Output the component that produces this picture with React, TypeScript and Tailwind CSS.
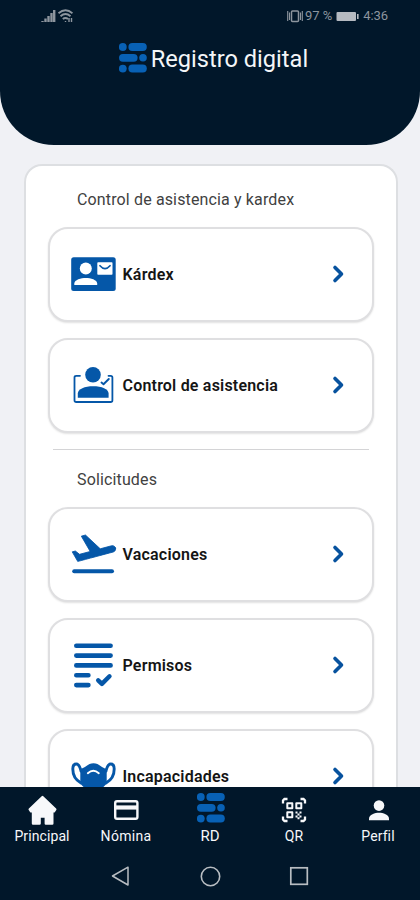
import type { ReactNode } from "react";

function Logo({ className }: { className: string }) {
  return (
    <svg className={className} viewBox="0 0 28 30" fill="#0861b5">
      <circle cx="3.8" cy="4" r="3.9" />
      <rect x="9.4" y="0" width="18.4" height="8" rx="4" />
      <rect x="0" y="10.9" width="18.6" height="7.8" rx="3.9" />
      <circle cx="24" cy="14.8" r="3.8" />
      <circle cx="3.8" cy="25.6" r="3.9" />
      <rect x="9.4" y="21.6" width="18.4" height="8" rx="4" />
    </svg>
  );
}

function CardIcon({ children }: { children: ReactNode }) {
  return (
    <svg className="mb-px size-12 shrink-0 text-[#0557a8]" viewBox="0 0 48 48" fill="none" strokeLinecap="round" strokeLinejoin="round">
      {children}
    </svg>
  );
}

const kardex = (
  <CardIcon>
    <rect x="2.2" y="7.3" width="44.5" height="33.7" rx="2.5" fill="currentColor" />
    <circle cx="16.8" cy="18.6" r="6" fill="white" />
    <path d="M5.3 35v-1.4C5.3 29.8 12 28 16.8 28s11.4 1.8 11.4 5.6V35z" fill="white" />
    <rect x="28.3" y="12.3" width="15.2" height="12.4" rx="0.8" fill="white" />
    <path d="M31 15.7q5 5.8 10 0" stroke="currentColor" strokeWidth="1.7" />
  </CardIcon>
);

const asistencia = (
  <CardIcon>
    <circle cx="24" cy="13.8" r="7.8" fill="currentColor" />
    <path d="M8.8 36.8v-4.2c0-4.8 7-7.4 15.4-7.4s15.4 2.6 15.4 7.4v4.2z" fill="currentColor" />
    <path d="M11 14.8H7.2Q5.5 14.8 5.5 16.5V39.2Q5.5 41 7.3 41H41.6Q43.4 41 43.4 39.2V16.5Q43.4 14.8 41.7 14.8H39.5" stroke="currentColor" strokeWidth="1.8" />
    <path d="M32.5 21.6l2 1.6 5.3-5.2" stroke="currentColor" strokeWidth="1.9" />
  </CardIcon>
);

const vacaciones = (
  <CardIcon>
    <path
      transform="translate(-0.7 -2.6) scale(2.14)"
      d="M22.07 9.64c-.21-.8-1.04-1.28-1.84-1.06L14.92 10l-6.9-6.43-1.93.51 4.14 7.17-4.97 1.33-1.97-1.54-1.45.39 2.59 4.49s7.12-1.9 16.57-4.43c.81-.23 1.28-1.05 1.07-1.85z"
      fill="currentColor"
      stroke="currentColor"
      strokeWidth="0.4"
    />
    <path d="M5.2 41.2H43" stroke="currentColor" strokeWidth="4" />
  </CardIcon>
);

const permisos = (
  <CardIcon>
    <path d="M7.3 4.8H41.6M7.3 14.6H41.6M7.3 24.4H41.6M7.3 34.3H19.4M7.3 44.1H19.4" stroke="currentColor" strokeWidth="4.6" />
    <path d="M29.2 39.3l3.7 3.6 7.6-7.6" stroke="currentColor" strokeWidth="4.4" />
  </CardIcon>
);

const incapacidades = (
  <CardIcon>
    <path d="M11.3 17C16 16.5 18.5 11.3 24.5 11.3S33 16.5 37.7 17V31C36 35 30 38.5 24.5 38.5S13 35 11.3 31z" fill="currentColor" />
    <path d="M12 31C6.5 28 3.8 23 3.8 17C3.8 13.500 5 12 7.300 12C10.500 12 11 15.500 12 19" stroke="currentColor" strokeWidth="2.9" />
    <path d="M37 31C42.5 28 45.2 23 45.2 17C45.2 13.500 44 12 41.700 12C38.500 12 38 15.500 37 19" stroke="currentColor" strokeWidth="2.9" />
    <path d="M18.8 21.2Q24.3 16.2 29.8 21.2" stroke="white" strokeWidth="1.9" />
  </CardIcon>
);

function Card({ icon, label, spacing }: { icon: ReactNode; label: string; spacing: string }) {
  return (
    <button className="flex h-[95px] w-full shrink-0 items-center rounded-[20px] border-2 border-[#dfdfe1] bg-white pr-[27px] pl-[18.5px] shadow-[0_1px_2px_rgba(0,0,0,0.12)]">
      {icon}
      <span className={`mt-px ml-1.5 whitespace-nowrap text-base leading-5 font-semibold text-[#151515] ${spacing}`}>{label}</span>
      <svg className="mb-px ml-auto h-5 w-3.5" viewBox="0 0 14 20" fill="none" stroke="#07529e" strokeWidth="3.6" strokeLinecap="round" strokeLinejoin="round">
        <path d="M4 3.5L10.5 10l-6.5 6.5" />
      </svg>
    </button>
  );
}

function Tab({ icon, label, spacing }: { icon: ReactNode; label: string; spacing: string }) {
  return (
    <div className="flex flex-col items-center">
      <div className="flex h-[38px] items-center justify-center">{icon}</div>
      <span className={`whitespace-nowrap leading-4 ${spacing}`}>{label}</span>
    </div>
  );
}

export default function App() {
  return (
    <div className="flex h-[900px] w-[420px] flex-col overflow-hidden bg-[#f0f1f5] font-['Roboto','Liberation_Sans',sans-serif]">
      <header className="h-[144.5px] shrink-0 rounded-b-[54px] bg-[#01172a]">
        <div className="flex h-8 items-center justify-between pr-8 pl-[41px] text-[#8d959e]">
          <svg className="h-4 w-8" viewBox="0 0 32 16" fill="none" stroke="currentColor">
            <path d="M1.5 14v-1M4.5 14v-3.5M7.5 14V8M10.5 14V5M13.2 14V2" strokeWidth="2.4" />
            <path d="M17.5 5.2Q24.5-.8 31.5 5.2M19.5 8.2Q24.5 4 29.5 8.2M21.8 11Q24.5 8.8 27 11" strokeWidth="1.9" />
            <path d="M24.5 13v1M28 14v-4M30.5 10v4" strokeWidth="1.4" />
          </svg>
          <div className="flex items-center">
            <svg className="h-4 w-4" viewBox="0 0 16 16" fill="none" stroke="currentColor" strokeWidth="1.5">
              <rect x="4.5" y="3" width="7" height="10.5" rx="1" />
              <path d="M2.5 4.5v7.5M.7 3v10M13.5 4.5v7.5M15.3 3v10" strokeWidth="1.1" />
            </svg>
            <span className="ml-0.5 whitespace-nowrap text-[13px]">97 %</span>
            <svg className="ml-1 h-3 w-6" viewBox="0 0 24 12" fill="#b5bac1">
              <rect x="0.5" y="2" width="19.5" height="9" rx="1" />
              <rect x="21" y="4" width="1.6" height="5" />
            </svg>
            <span className="ml-[3px] text-[13px] tracking-[-0.1px]">4:36</span>
          </div>
        </div>
        <div className="flex h-[52px] items-center pl-[118.8px]">
          <Logo className="h-[30px] w-7" />
          <h1 className="mt-px ml-1 whitespace-nowrap text-[23.6px] leading-7 font-normal text-[#f4f6f8]">Registro digital</h1>
        </div>
      </header>

      <main className="mr-[22px] ml-6 mt-[19px] min-h-0 flex-1 overflow-hidden rounded-t-[18px] border-2 border-b-0 border-[#dddfe2] bg-white px-[22px]">
        <h2 className="mt-6 pl-[29px] text-base leading-5 whitespace-nowrap text-[#414141] tracking-[0.14px]">Control de asistencia y kardex</h2>
        <div className="mt-[17px] flex flex-col gap-4">
          <Card icon={kardex} label="Kárdex" spacing="tracking-[0.2px]" />
          <Card icon={asistencia} label="Control de asistencia" spacing="tracking-[0.2px]" />
        </div>
        <hr className="mx-[5px] mt-4 border-t-[1.5px] border-[#d4d4d6]" />
        <h2 className="mt-5 pl-[29px] text-base leading-5 whitespace-nowrap text-[#414141] tracking-[0.14px]">Solicitudes</h2>
        <div className="mt-[17px] flex flex-col gap-4">
          <Card icon={vacaciones} label="Vacaciones" spacing="tracking-[0.2px]" />
          <Card icon={permisos} label="Permisos" spacing="tracking-[0.2px]" />
          <Card icon={incapacidades} label="Incapacidades" spacing="tracking-[0.2px]" />
        </div>
      </main>

      <footer className="h-[113px] shrink-0 bg-[#01172a] text-[#f7f8fa]">
        <nav className="grid h-[67px] grid-cols-5 pt-[3px]">
          <Tab
            label="Principal"
            spacing="text-sm tracking-[0.1px]"
            icon={
              <svg className="mt-0.5 h-8 w-8" viewBox="0 0 32 32" fill="currentColor" stroke="currentColor" strokeWidth="2.4" strokeLinejoin="round">
                <path d="M16.5 3L29.3 15.300L28 17.200H26.300V29.500H19.800V22.500H13.600V29.500H7V17.200H5L3.700 15.300z" />
              </svg>
            }
          />
          <Tab
            label="Nómina"
            spacing="text-sm tracking-[0.3px]"
            icon={
              <svg className="mt-0.5 h-6 w-7" viewBox="0 0 28 24" fill="none" stroke="currentColor">
                <rect x="3.2" y="3.2" width="22.2" height="17.6" rx="1.8" strokeWidth="2.4" />
                <path d="M3.2 9.5H25.2" strokeWidth="4.2" />
              </svg>
            }
          />
          <Tab label="RD" spacing="text-[15px]" icon={<Logo className="mb-0.5 ml-px h-[30px] w-7" />} />
          <Tab
            label="QR"
            spacing="text-sm"
            icon={
              <svg className="mt-0.5 h-[26px] w-[26px]" viewBox="0 0 26 26" fill="none" stroke="currentColor" strokeWidth="2.3">
                <path d="M2 6.500V3.500L3.500 2H6.500M19.500 2H22.500L24 3.500V6.500M24 19.500V22.500L22.500 24H19.500M6.500 24H3.500L2 22.500V19.500" />
                <path d="M6.300 6.300h5v5h-5zM15.300 6.300h5v5h-5zM6.300 15.300h5v5h-5z" strokeWidth="2" strokeLinejoin="round" />
                <path d="M14.500 15.500h2M18.500 15.500h2M16.500 17.500h2M14.500 19.500h2M18.500 19.500h2M16.500 21.200h2" strokeWidth="1.9" />
              </svg>
            }
          />
          <Tab
            label="Perfil"
            spacing="text-sm tracking-[0.1px]"
            icon={
              <svg className="mt-0.5 ml-px h-6 w-6" viewBox="0 0 24 24" fill="currentColor">
                <circle cx="12" cy="7.6" r="5.3" />
                <path d="M2 22.200V20.500C2 16.800 8 14.800 12 14.800S22 16.800 22 20.500V22.200z" />
              </svg>
            }
          />
        </nav>
        <div className="flex h-[44px] items-center justify-between px-[111px]">
          <svg className="size-[21px]" viewBox="0 0 21 21" fill="none" stroke="#b8bdc2" strokeWidth="1.5" strokeLinejoin="round">
            <path d="M17 1.200V19L1.500 10z" />
          </svg>
          <svg className="size-[21px]" viewBox="0 0 21 21" fill="none" stroke="#b8bdc2" strokeWidth="1.6">
            <circle cx="10.5" cy="10.5" r="9.2" />
          </svg>
          <svg className="size-[21px]" viewBox="0 0 21 21" fill="none" stroke="#b8bdc2" strokeWidth="1.7">
            <rect x="2.8" y="1.8" width="16.5" height="16.5" />
          </svg>
        </div>
      </footer>
    </div>
  );
}
